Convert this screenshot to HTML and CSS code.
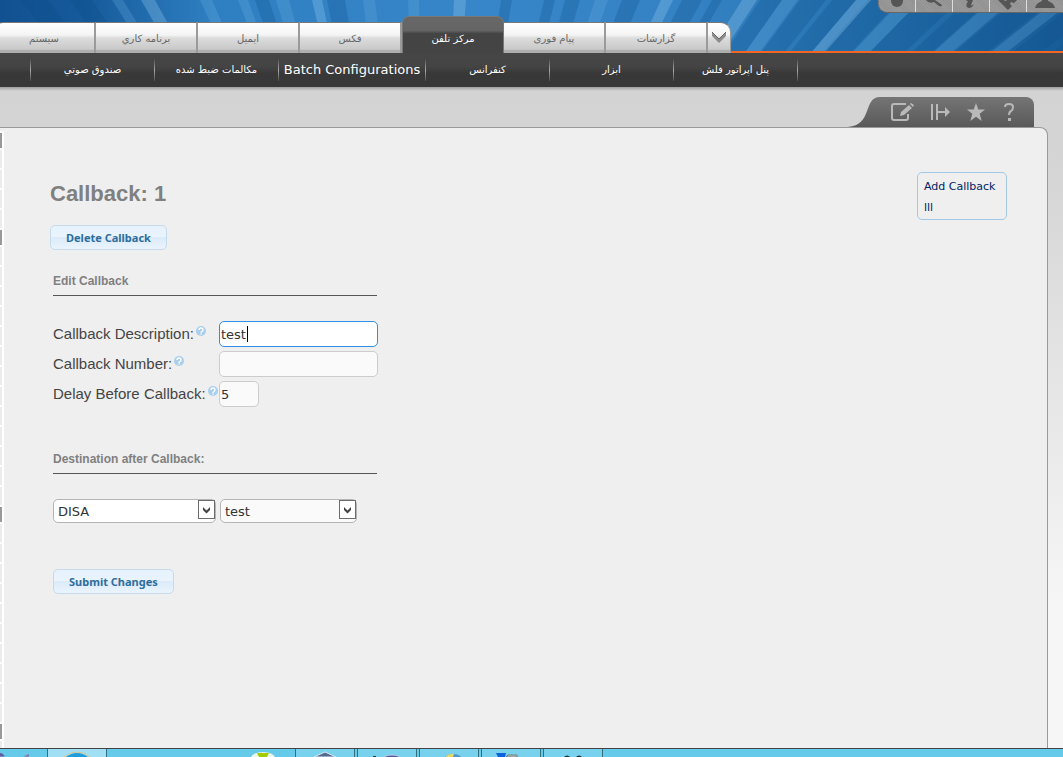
FILE: index.html
```html
<!DOCTYPE html>
<html lang="fa">

<head>
    <meta charset="UTF-8" />
    <meta name="viewport" content="width=device-width, initial-scale=1.0" />
    <title>Callback</title>
    <link rel="stylesheet" href="styles.css">
</head>

<body>
    <header class="header">
        <svg class="rays" viewBox="0 0 1063 51" preserveAspectRatio="xMidYMin slice" aria-hidden="true">
            <defs>
                <linearGradient id="sky">
                    <stop offset="0" stop-color="#125191" />
                    <stop offset="0.08" stop-color="#165a9b" />
                    <stop offset="0.2" stop-color="#2e7fc1" />
                    <stop offset="0.45" stop-color="#3786c9" />
                    <stop offset="0.65" stop-color="#3482c3" />
                    <stop offset="0.85" stop-color="#2470ad" />
                    <stop offset="1" stop-color="#185c97" />
                </linearGradient>
            </defs>
            <rect width="1063" height="51" fill="url(#sky)" />
            <g fill="#0a4a86" opacity="0.25">
                <path d="M430 500L-60 0H-20zM430 500L20 0H48zM430 500L70 0H92z" />
                <path d="M430 500L255 0H269zM430 500L327 0H345zM430 500L501 0H512zM430 500L544 0H555z" />
                <path d="M430 500L565 0H580zM430 500L622 0H640zM430 500L682 0H702zM430 500L712 0H722z" />
                <path d="M430 500L760 0H782zM430 500L800 0H826zM430 500L832 0H856zM430 500L868 0H900z" />
                <path d="M430 500L921 0H960zM430 500L968 0H990zM430 500L1016 0H1052zM430 500L1080 0H1112zM430 500L1126 0H1170z" />
            </g>
            <g fill="#6fb2e2" opacity="0.25">
                <path d="M430 500L112 0H123zM430 500L200 0H212zM430 500L238 0H248zM430 500L276 0H289z" />
                <path d="M430 500L363 0H375zM430 500L408 0H419zM430 500L595 0H608z" />
                <path d="M430 500L782 0H798zM430 500L902 0H921zM430 500L992 0H1013zM430 500L1056 0H1074z" />
            </g>
            <g fill="#8cc4ec" opacity="0.35">
                <path d="M430 500L141 0H155zM430 500L312 0H322zM430 500L454 0H466zM430 500L661 0H673z" />
                <path d="M430 500L742 0H757zM430 500L856 0H871z" />
            </g>
        </svg>

        <div class="tools">
            <button type="button" aria-label="Status"><svg width="36" height="12" viewBox="0 0 36 12">
                    <circle cx="18" cy="1" r="6" />
                </svg></button>
            <button type="button" aria-label="Search"><svg width="36" height="12" viewBox="0 0 36 12">
                    <path d="M10 0q3 4 8 2l5 4q3 1 3-1L19 0z" />
                </svg></button>
            <button type="button" aria-label="Information"><svg width="36" height="12" viewBox="0 0 36 12">
                    <path d="M14 0h6l-2 5q1 1 3-1-2 4-5 4-4-1-2-5l1-2h-2z" />
                </svg></button>
            <button type="button" aria-label="Add-ons"><svg width="36" height="12" viewBox="0 0 36 12">
                    <path d="M8 0h6q1 2 3 0h10l-3 3-3-1q-2 2 1 4l-4 4z" />
                </svg></button>
            <button type="button" aria-label="User"><svg width="36" height="12" viewBox="0 0 36 12">
                    <path d="M15 0h6v1q6 2 7 7H8q1-5 7-7z" />
                </svg></button>
        </div>

        <nav class="tabs">
            <a href="#">سيستم</a>
            <a href="#">برنامه كاري</a>
            <a href="#">ايميل</a>
            <a href="#">فكس</a>
            <a href="#" class="active">مركز تلفن</a>
            <a href="#">پیام فوری</a>
            <a href="#">گزارشات</a>
            <button type="button" class="more" aria-label="More">
                <svg width="14" height="12" viewBox="0 0 14 12">
                    <path d="M0 0l7 7 7-7v4l-7 7-7-7z" fill="#8d8d8d" />
                    <path d="M0 0l7 7 7-7" fill="none" stroke="#666" />
                </svg>
            </button>
        </nav>
    </header>

    <nav class="subnav">
        <a href="#">صندوق صوتي</a>
        <a href="#">مكالمات ضبط شده</a>
        <a href="#" class="wide">Batch Configurations</a>
        <a href="#">كنفرانس</a>
        <a href="#">ابزار</a>
        <a href="#">پنل اپراتور فلش</a>
    </nav>

    <div class="page">
        <div class="actions">
            <svg class="curve" width="32" height="30" viewBox="0 0 32 30" preserveAspectRatio="none" aria-hidden="true">
                <defs>
                    <linearGradient id="slope" x2="0" y2="1">
                        <stop offset="0" stop-color="#757575" />
                        <stop offset="1" stop-color="#595959" />
                    </linearGradient>
                </defs>
                <path d="M0 30C25 28 15 0 32 0V30z" fill="url(#slope)" />
            </svg>
            <div class="action-list">
                <button type="button" aria-label="Edit"><svg width="24" height="20" viewBox="0 0 24 20">
                        <path d="M16 2H4q-2 0-2 2v12q0 2 2 2h12q2 0 2-2v-4" fill="none" stroke="#b9b9b9" stroke-width="2" />
                        <path d="M10 14l1-4 8-7 3 3-8 7zM20 2l1-1 3 2-1 2z" fill="#b9b9b9" />
                    </svg></button>
                <button type="button" aria-label="Expand"><svg width="20" height="20" viewBox="0 0 20 20">
                        <path d="M2 2v16M7 2v16M7 10h10" fill="none" stroke="#b9b9b9" stroke-width="2" />
                        <path d="M15 5l5 5-5 5z" fill="#b9b9b9" />
                    </svg></button>
                <button type="button" aria-label="Bookmark"><svg width="20" height="20" viewBox="0 0 20 20">
                        <path d="M10 1l2.300 6.500H19l-5.300 4.300L15.700 19 10 14.800 4.300 19l2-7.200L1 7.500h6.700z" fill="#b9b9b9" />
                    </svg></button>
                <button type="button" aria-label="Help"><svg width="14" height="20" viewBox="0 0 14 20">
                        <path d="M3 5q0-3 4-3t4 3q0 3-2 4t-2 4" fill="none" stroke="#b9b9b9" stroke-width="2" />
                        <path d="M6 16h3v3H6z" fill="#b9b9b9" />
                    </svg></button>
            </div>
        </div>

        <div class="panel">
            <div class="side-edge">
                <i class="head"></i><i></i><i></i><i></i><i></i>
                <i class="head"></i><i></i><i></i><i></i><i></i><i></i><i></i><i></i><i></i><i></i><i></i><i></i><i></i><i></i>
                <i class="head"></i><i></i><i></i><i></i><i></i><i></i><i></i><i></i><i></i><i></i><i></i>
                <i class="head"></i><i></i>
            </div>

            <main class="content">
                <h1>Callback: 1</h1>
                <button type="button" class="btn">Delete Callback</button>

                <form class="callback-form">
                    <h2>Edit Callback</h2>
                    <div class="fields">
                        <div class="label">
                            <label for="description">Callback Description:</label>
                            <svg class="hint" viewBox="0 0 10 10"><use href="#hint" /></svg>
                        </div>
                        <div class="focused"><input type="text" id="description" value="test" /></div>
                        <div class="label">
                            <label for="number">Callback Number:</label>
                            <svg class="hint" viewBox="0 0 10 10"><use href="#hint" /></svg>
                        </div>
                        <input type="text" id="number" />
                        <div class="label">
                            <label for="delay">Delay Before Callback:</label>
                            <svg class="hint" viewBox="0 0 10 10"><use href="#hint" /></svg>
                        </div>
                        <input type="text" id="delay" class="short" value="5" />
                    </div>

                    <h2>Destination after Callback:</h2>
                    <div class="destination">
                        <div class="select type">
                            <select aria-label="Destination type"><option>DISA</option></select>
                            <svg viewBox="0 0 18 20"><use href="#drop" /></svg>
                        </div>
                        <div class="select target">
                            <select aria-label="Destination"><option>test</option></select>
                            <svg viewBox="0 0 18 20"><use href="#drop" /></svg>
                        </div>
                    </div>

                    <button type="button" class="btn">Submit Changes</button>
                </form>
            </main>

            <aside class="rnav">
                <a href="#">Add Callback</a>
                <a href="#">lll</a>
            </aside>
        </div>
    </div>

    <footer class="taskbar">
        <div class="task first">
            <svg width="50" height="8" viewBox="0 0 50 8">
                <path d="M0 4q4 0 5 4H0z" fill="#6a5aa0" />
                <path d="M26 8l6-3v3z" fill="#8a6b9a" />
            </svg>
        </div>
        <div class="task open current">
            <svg width="30" height="8" viewBox="0 0 30 8">
                <path d="M2 8q13-10 26 0" fill="none" stroke="#d9c58a" />
                <path d="M4 8q11-8 22 0z" fill="#1c9fdc" />
            </svg>
        </div>
        <div class="task pinned">
            <svg width="24" height="8" viewBox="0 0 24 8">
                <ellipse cx="12" cy="9" rx="12" ry="6" fill="#eef5ea" />
                <path d="M6 4h12l-2 4H8z" fill="#a4cc00" />
            </svg>
        </div>
        <div class="task open">
            <svg width="26" height="8" viewBox="0 0 26 8">
                <path d="M2 8l11-5 11 5z" fill="#536a91" stroke="#d9e8f5" />
            </svg>
        </div>
        <div class="task open">
            <svg width="30" height="8" viewBox="0 0 30 8">
                <ellipse cx="20" cy="10" rx="9" ry="4" fill="#44609c" stroke="#c5cbe0" />
                <path d="M1 7h3v1H1z" fill="#333" />
            </svg>
        </div>
        <div class="task open">
            <svg width="30" height="8" viewBox="0 0 30 8">
                <ellipse cx="19" cy="10" rx="9" ry="5" fill="#4f97cd" />
                <path d="M11 8q4-4 9-3l-1 3z" fill="#e2d967" />
            </svg>
        </div>
        <div class="task open">
            <svg width="30" height="8" viewBox="0 0 30 8">
                <path d="M0 4h10l-1 4H2z" fill="#0b62db" />
                <path d="M10 8l2-2h9v2z" fill="#c9c9bd" stroke="#6d7c84" />
            </svg>
        </div>
        <div class="task open">
            <svg width="30" height="8" viewBox="0 0 30 8">
                <path d="M6 8q3-3 6 0zM18 8q3-3 6 0z" fill="#1f2b30" />
            </svg>
        </div>
    </footer>

    <!-- shared symbols -->
    <svg class="symbols" aria-hidden="true">
        <symbol id="hint" viewBox="0 0 10 10">
            <circle cx="5" cy="5" r="5" fill="#a9cfec" />
            <path d="M3 4q0-2 2-2t2 2q0 1-1 1.500T5 7M5 7.600v1.200" fill="none" stroke="#fff" stroke-width="1.300" />
        </symbol>
        <symbol id="drop" viewBox="0 0 18 20">
            <rect x="0.500" y="0.500" width="16" height="18" fill="#fff" stroke="#6b6b6b" />
            <path d="M5 7v3l3.500 3.500L12 10V7L8.500 10.500z" fill="#444" />
        </symbol>
    </svg>
</body>

</html>
```

FILE: styles.css
```css
:root {
    --grey: #808080;
    --line: #999;
    --panel: #efefef;
    --blue: #2e6e9e;
    --ui-font: "DejaVu Sans", Verdana, sans-serif;
    --text-font: "Liberation Sans", Arial, sans-serif;
}

* {
    box-sizing: border-box;
}

body {
    margin: 0;
    min-height: 100vh;
    display: flex;
    flex-direction: column;
    font-family: var(--ui-font);
    font-size: 13px;
    color: #444;
    overflow-x: hidden;
}

a {
    text-decoration: none;
}

button {
    font-family: inherit;
    cursor: pointer;
}

/* header */
.header {
    position: relative;
    height: 53px;
    display: flex;
    align-items: flex-end;
    border-bottom: 2px solid #f26522;
    background: #2e7fc1;
}

.rays {
    position: absolute;
    top: 0;
    left: 0;
    width: 100%;
    height: 100%;
}

.tools {
    position: absolute;
    top: 0;
    right: 0;
    display: flex;
    background: repeating-linear-gradient(45deg, #999 0 1px, #929292 1px 2px);
    border-bottom: 1px solid #666;
    border-left: 1px solid #777;
    border-bottom-left-radius: 9px;
}

.tools button {
    display: flex;
    padding: 0;
    border: 0;
    background: none;
    border-right: 1px solid #ddd;
}

.tools button:last-child {
    border-right: 0;
}

.tools svg {
    fill: #555;
}

.tabs {
    position: relative;
    display: flex;
    align-items: flex-end;
    margin: 0 0 -2px -6px;
}

.tabs a,
.more {
    width: 102px;
    height: 31px;
    display: flex;
    align-items: center;
    justify-content: center;
    border: 0;
    border-top: 1px solid #777;
    border-right: 2px solid #9a9a9a;
    background: linear-gradient(#fff 0, #f4f4f4 40%, #dcdcdc 50%, #c9c9c9 88%, #aeaeae 90%);
    color: #666;
    font-size: 10px;
}

.tabs a:first-child {
    border-top-left-radius: 9px;
}

.tabs .active {
    height: 37px;
    padding-top: 6px;
    border: 1px solid #777;
    border-bottom: 0;
    border-radius: 7px 7px 0 0;
    background: linear-gradient(#686868 0, #646464 38%, #444 46%);
    color: #fff;
}

.tabs .more {
    width: 23px;
    padding: 0;
    border-right-width: 1px;
    border-top-right-radius: 10px;
}

.subnav {
    display: flex;
    align-items: center;
    height: 34px;
    padding-left: 30px;
    background: linear-gradient(#464646 0, #444 40%, #383838 60%);
}

.subnav a {
    width: 124px;
    height: 22px;
    line-height: 22px;
    border-left: 1px solid;
    border-image: linear-gradient(#444, #aaa, #444) 1;
    color: #fff;
    font-size: 10px;
    text-align: center;
    white-space: nowrap;
}

.subnav .wide {
    width: 147px;
    font-size: 13px;
}

.subnav a:last-child {
    width: 125px;
    border-right: 1px solid;
}

/* page */
.page {
    flex: 1;
    display: flex;
    flex-direction: column;
    padding-right: 15px;
    background: linear-gradient(#a0a0a0 0, #b8b8b8 2px, #d3d3d3 4px, #d5d5d5 80px, #f6f6f6 520px);
}

.actions {
    display: flex;
    justify-content: flex-end;
    padding: 10px 14px 0 0;
}

.action-list {
    display: flex;
    align-items: center;
    gap: 16px;
    height: 30px;
    padding: 0 18px 0 10px;
    border-top-right-radius: 8px;
    background: linear-gradient(#757575, #595959);
}

.action-list button {
    display: flex;
    padding: 0;
    border: 0;
    background: none;
}

.panel {
    flex: 1;
    display: flex;
    align-items: flex-start;
    border: 1px solid var(--line);
    border-width: 1px 1px 0 0;
    border-top-right-radius: 8px;
    background: var(--panel);
}

/* right edge of the folded side menu */
.side-edge {
    display: flex;
    flex-direction: column;
    gap: 2px;
    width: 4px;
    margin-top: 3px;
    padding: 2px 2px 0 0;
    background: #fff;
}

.side-edge i {
    height: 18px;
    background: #ececec;
}

.side-edge .head {
    height: 15px;
    background: #999;
}

.side-edge i:last-child {
    height: 7px;
}

.content {
    flex: 1;
    padding: 52px 0 0 46px;
}

h1 {
    margin: 0 0 18px;
    color: var(--grey);
    font: bold 22px/27px var(--text-font);
}

.btn {
    height: 25px;
    padding: 0 15px;
    border: 1px solid #c5dbec;
    border-radius: 5px;
    background: linear-gradient(#e6f2fc 0, #e9f4fd 48%, #dbebf9 50%, #eaf4fd 100%);
    color: var(--blue);
    font: bold 11px "Noto Sans", sans-serif;
}

.callback-form {
    padding: 24px 3px 0;
}

h2 {
    width: 324px;
    margin: 0 0 25px;
    padding-bottom: 6px;
    border-bottom: 1px solid #555;
    color: var(--grey);
    font: bold 12px/15px var(--text-font);
}

.fields {
    display: grid;
    grid-template-columns: 162px 159px;
    gap: 4px;
    margin-bottom: 45px;
}

.label {
    display: flex;
    gap: 2px;
    font: 15px/26px var(--text-font);
    white-space: nowrap;
}

.hint {
    flex: none;
    width: 10px;
    height: 10px;
    margin-top: 5px;
}

.fields input {
    display: block;
    width: 100%;
    height: 26px;
    padding: 0 1px;
    border: 1px solid #ccc;
    border-radius: 5px;
    background: #fafafa;
    color: #333;
    font: 13px var(--ui-font);
}

.fields .short {
    width: 40px;
}

.focused {
    position: relative;
}

.focused input {
    border-color: #2f8fe5;
    background: #fff;
}

.focused::after {
    content: "";
    position: absolute;
    left: 28px;
    top: 5px;
    width: 1px;
    height: 16px;
    background: #000;
}

.destination {
    display: flex;
    gap: 4px;
    margin-bottom: 46px;
}

.select {
    position: relative;
}

.type {
    width: 163px;
}

.target {
    width: 137px;
}

.select select {
    appearance: none;
    display: block;
    width: 100%;
    height: 24px;
    padding: 0 4px;
    border: 1px solid #b5b5b5;
    border-radius: 5px;
    background: #fafafa;
    color: #333;
    font: 13px var(--ui-font);
}

.type select {
    background: #fff;
}

.select svg {
    position: absolute;
    top: 1px;
    right: 0;
    width: 18px;
    height: 20px;
    pointer-events: none;
}

.rnav {
    width: 90px;
    margin: 44px 40px 0 0;
    padding: 3px 6px 1px;
    border: 1px solid #a3c8e5;
    border-radius: 5px;
    font-size: 11px;
    line-height: 21px;
}

.rnav a {
    display: block;
    color: #002266;
    white-space: nowrap;
}

/* taskbar */
.taskbar {
    display: flex;
    gap: 2px;
    height: 9px;
    border-top: 1px solid #444;
    background: #66cbea;
}

.task {
    display: flex;
    justify-content: center;
    width: 60px;
    height: 8px;
}

.open {
    border: 1px solid #33707f;
    border-width: 0 1px;
    background: #78d2ee;
}

.current {
    background: #a0dff4;
}

.first {
    width: 45px;
    justify-content: flex-start;
}

.pinned {
    width: 184px;
    padding-left: 124px;
}

.symbols {
    display: none;
}
```
